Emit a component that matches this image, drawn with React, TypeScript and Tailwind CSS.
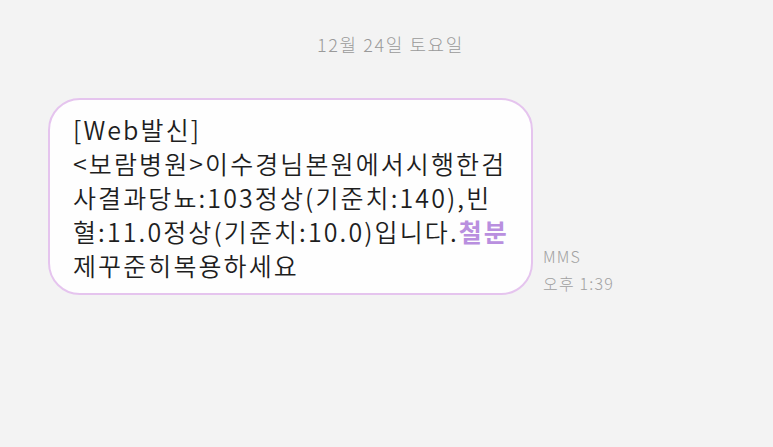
export default function App() {
  const font = '"Noto Sans CJK KR", "Noto Sans", sans-serif'

  return (
    <div className="w-[773px] h-[447px] bg-[#f3f3f3] overflow-hidden" style={{ fontFamily: font }}>
      {/* Date header */}
      <div className="pt-[30px] text-center text-[18px] leading-[28px] tracking-[1.6px] text-[#9a9a9a] pl-[8px] font-light">
        12월 24일 토요일
      </div>

      {/* Message row */}
      <div className="flex items-end pl-[48px] mt-[40px] gap-[10px]">
        <div className="w-[485px] h-[197px] rounded-[32px] border-2 border-[#e5c4ee] bg-[#fefefe] pl-[23px] pt-[12px] text-[#1e1e1e] text-[25px] leading-[34px] tracking-[2.1px] font-[350]">
          <div>[Web발신]</div>
          <div>&lt;보람병원&gt;이수경님본원에서시행한검</div>
          <div>사결과당뇨:103정상(기준치:140),빈</div>
          <div>
            혈:11.0정상(기준치:10.0)입니다.<span className="text-[#b98fdf] font-bold">철분</span>
          </div>
          <div>제꾸준히복용하세요</div>
        </div>
        <div className="flex flex-col pb-[0px] mb-[-2px] text-[16px] leading-[27px] tracking-[1.2px] text-[#a0a0a0] font-light">
          <span>MMS</span>
          <span>오후 1:39</span>
        </div>
      </div>
    </div>
  )
}
